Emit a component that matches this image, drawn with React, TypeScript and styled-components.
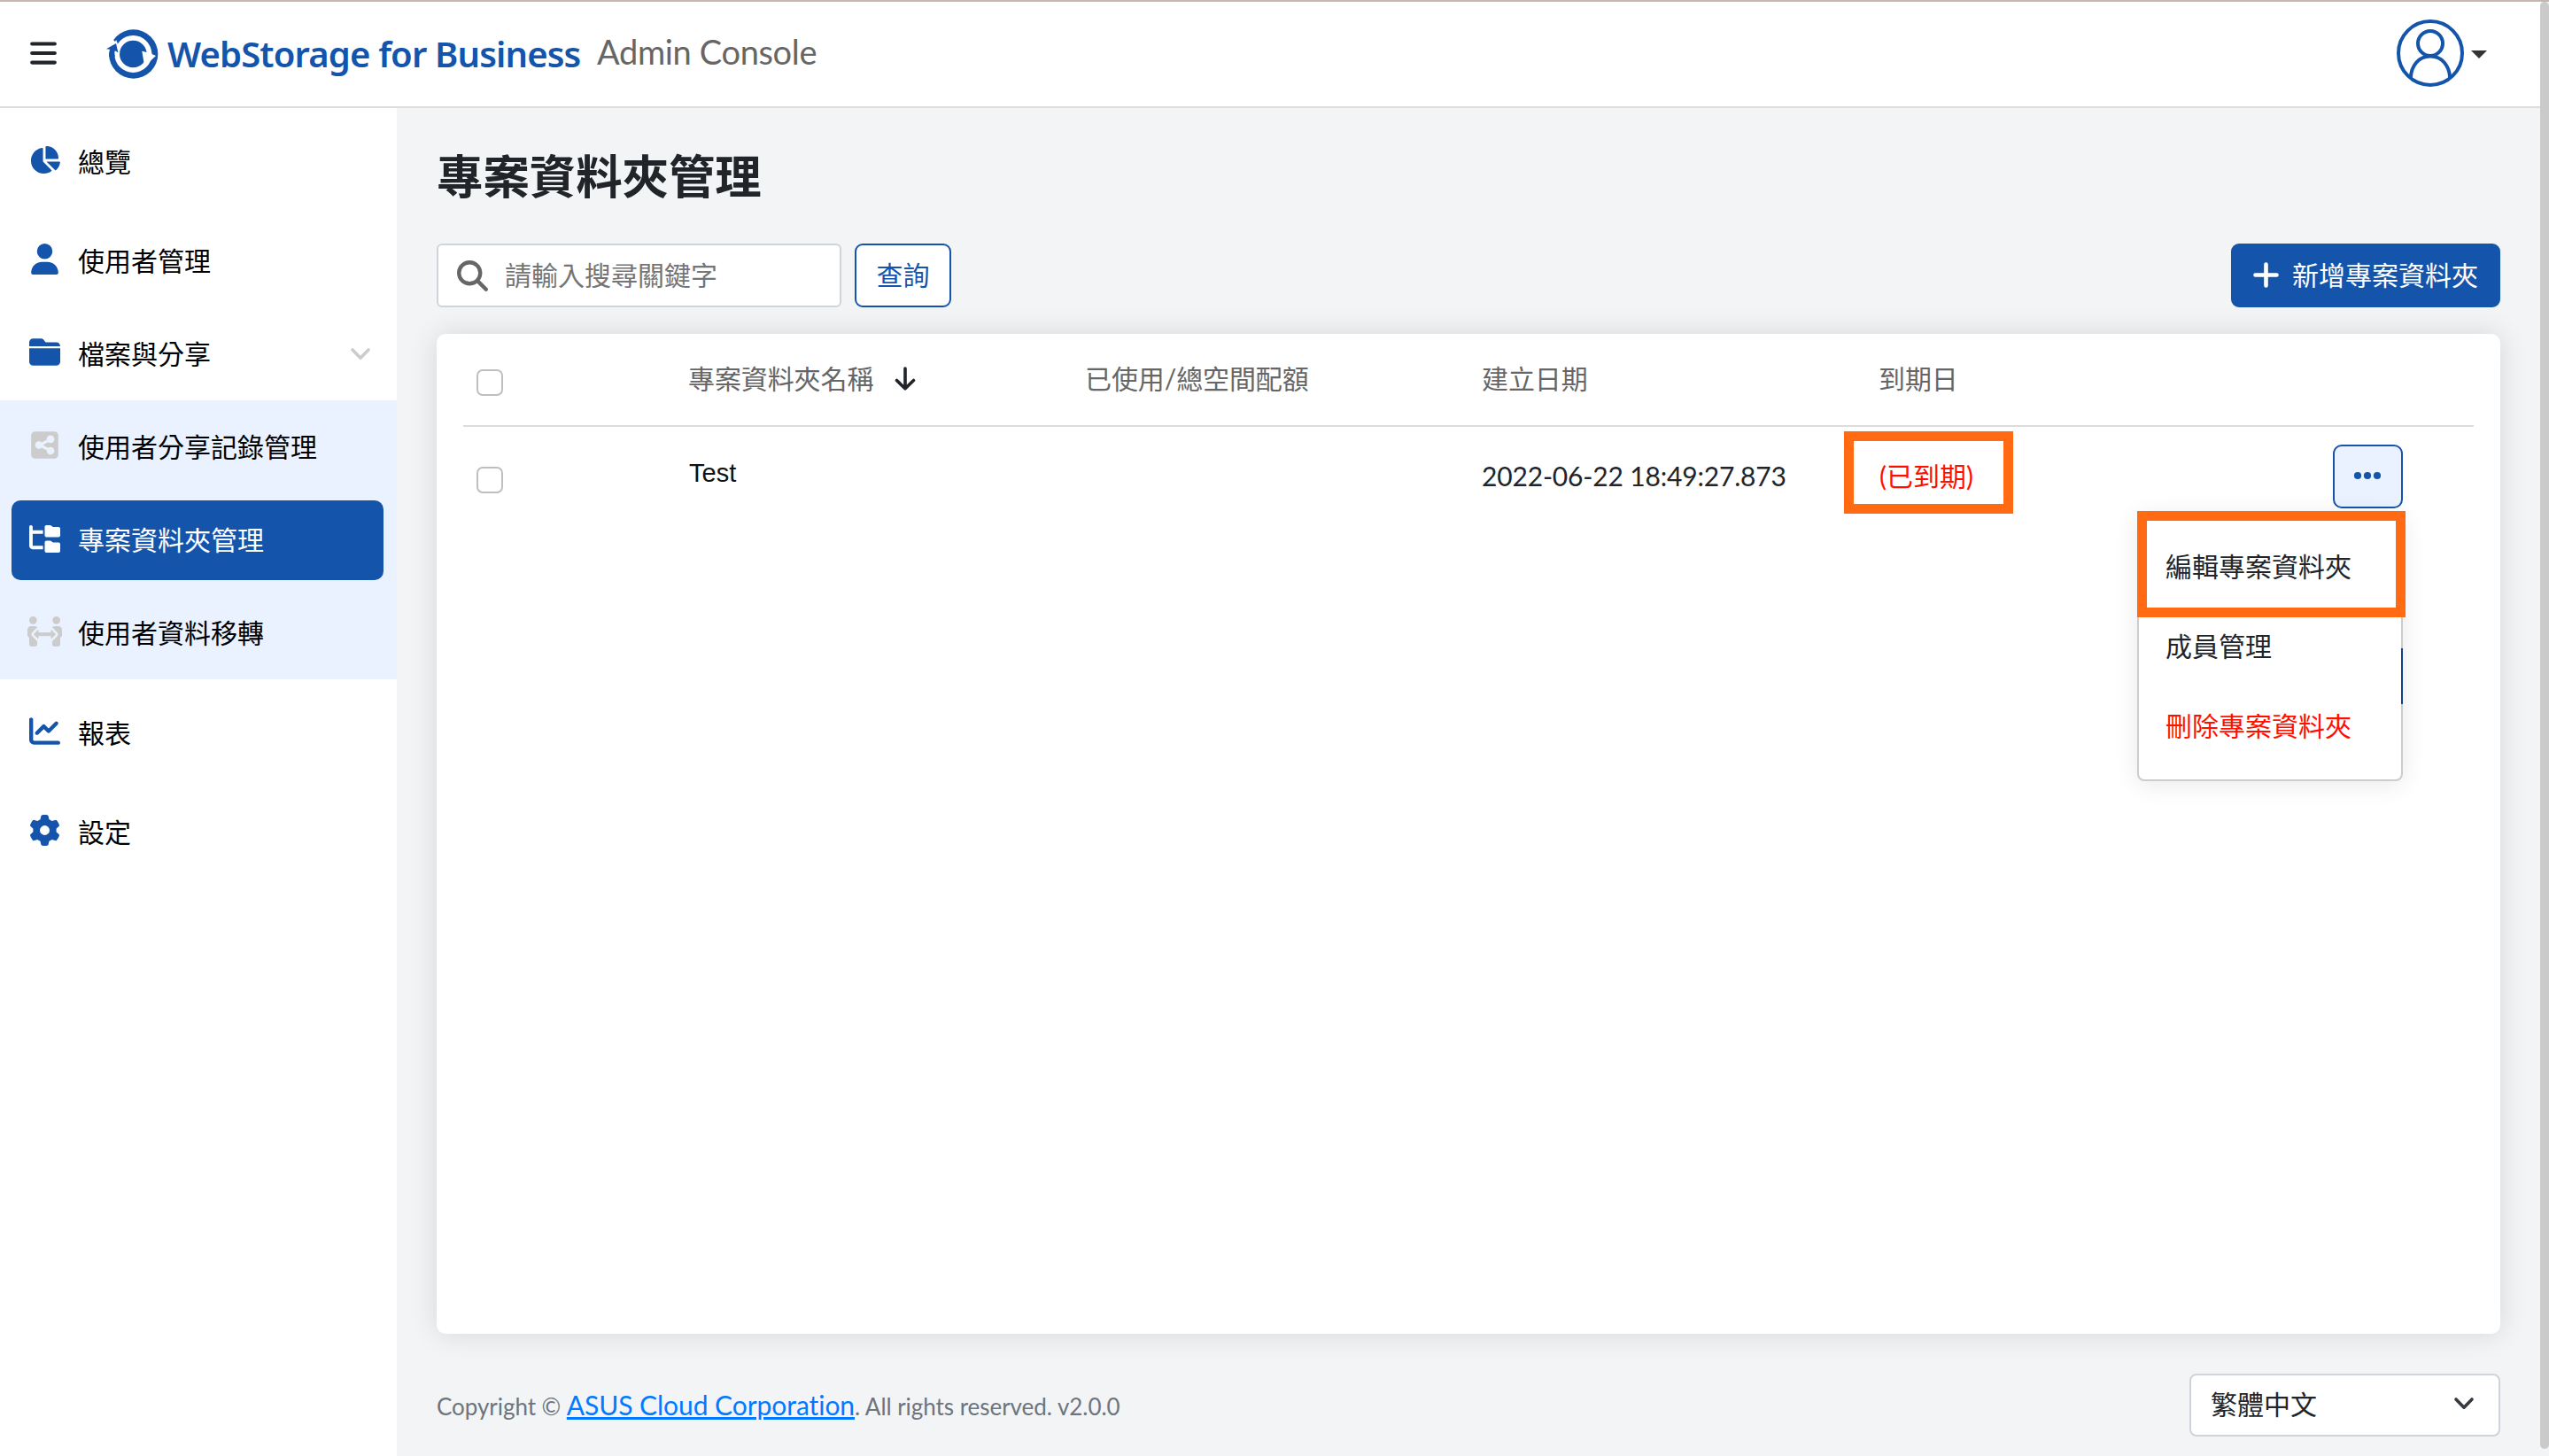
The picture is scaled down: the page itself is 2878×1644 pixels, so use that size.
import React from "react";
import styled, { createGlobalStyle, css } from "styled-components";
import {
  FaChartPie,
  FaUser,
  FaFolderClosed,
  FaSquareShareNodes,
  FaFolderTree,
  FaChartLine,
  FaGear,
  FaMagnifyingGlass,
} from "react-icons/fa6";

const blue = "#1455ab";
const grey = "#666666";
const ink = "#212529";
const red = "#ff0f00";
const orange = "#ff6a13";

const GlobalStyle = createGlobalStyle`
  *, *::before, *::after { box-sizing: border-box; }
  body {
    margin: 0;
    overflow: hidden;
    background: #f3f4f6;
    color: ${ink};
    font-family: Lato, "Noto Sans CJK TC", sans-serif;
    font-size: 30px;
    line-height: 44px;
  }
`;

const Window = styled.div`
  display: flex;
  width: 2878px;
  height: 1644px;
  border-top: 2px solid #c7b5af;
`;

const Page = styled.div`
  flex: 1;
  display: flex;
  flex-direction: column;
  min-width: 0;
`;

const ScrollThumb = styled.div`
  width: 10px;
  height: 1634px;
  border-radius: 5px;
  background: #cacaca;
`;

const Header = styled.header`
  display: flex;
  align-items: center;
  height: 120px;
  padding: 0 60px 2px 34px;
  background: #fff;
  border-bottom: 2px solid #dcdcdc;
`;

const HeaderSpacer = styled.div`
  flex: 1;
`;

const Brand = styled.div`
  display: flex;
  align-items: center;
  margin-left: 54px;
  padding-top: 2px;
`;

const BrandName = styled.span`
  margin: -1px 0 0 9px;
  width: 467px;
  white-space: nowrap;
  font-family: "Noto Sans", sans-serif;
  font-size: 40px;
  font-weight: 600;
  letter-spacing: -0.85px;
  color: ${blue};
`;

const Product = styled.span`
  margin: -6px 0 0 18px;
  white-space: nowrap;
  font-size: 38px;
  letter-spacing: -0.35px;
  color: ${grey};
`;

const Caret = styled.i`
  margin: 2px 0 0 8px;
  border: 9px solid transparent;
  border-top-color: #333;
  border-bottom: 0;
`;

const Body = styled.div`
  flex: 1;
  display: flex;
  min-height: 0;
`;

const Sidebar = styled.nav`
  display: flex;
  flex-direction: column;
  width: 448px;
  padding-top: 8px;
  background: #fff;
`;

const SubMenu = styled.div`
  display: flex;
  flex-direction: column;
  background: #eaf2ff;
`;

const NavItem = styled.a<{ $active?: boolean; $muted?: boolean; $gap?: number }>`
  display: flex;
  align-items: center;
  height: 105px;
  margin-top: ${(p) => p.$gap ?? 0}px;
  padding: 0 30px;
  color: #000;
  svg { color: ${(p) => (p.$muted ? "#cccccc" : blue)}; }
  ${(p) =>
    p.$active &&
    css`
      height: 90px;
      margin: 8px 15px 7px 13px;
      padding: 0 17px;
      border-radius: 10px;
      background: ${blue};
      color: #fff;
      svg { color: #fff; }
    `}
`;

const NavIcon = styled.span`
  display: flex;
  justify-content: center;
  width: 40px;
  margin: -4px 18px 0 0;
  font-size: 35px;
`;

const NavLabel = styled.span`
  flex: 1;
  margin-top: -2px;
`;

const Main = styled.main`
  flex: 1;
  display: flex;
  flex-direction: column;
  padding: 37px 45px 0;
`;

const Title = styled.h1`
  margin: 0;
  font-size: 52.4px;
  line-height: 80px;
  font-weight: 600;
`;

const Toolbar = styled.div`
  display: flex;
  align-items: center;
  margin-top: 36px;
`;

const SearchBox = styled.label`
  display: flex;
  align-items: center;
  width: 457px;
  height: 72px;
  padding-left: 21px;
  border: 2px solid #ced4da;
  border-radius: 6px;
  background: #fff;
  svg { color: ${grey}; font-size: 35px; }
`;

const SearchInput = styled.input`
  width: 360px;
  height: 44px;
  margin: -2px 0 0 19px;
  padding: 0;
  border: 0;
  background: none;
  font: inherit;
  &::placeholder { color: #757575; opacity: 1; }
`;

const Button = styled.button<{ $primary?: boolean }>`
  display: flex;
  align-items: center;
  justify-content: center;
  height: 72px;
  width: ${(p) => (p.$primary ? 304 : 109)}px;
  padding: 0 0 2px;
  margin-left: ${(p) => (p.$primary ? "auto" : "15px")};
  gap: 15px;
  border: 2px solid ${blue};
  border-radius: 9px;
  background: ${(p) => (p.$primary ? blue : "#fff")};
  color: ${(p) => (p.$primary ? "#fff" : blue)};
  font: inherit;
`;

const Card = styled.section`
  height: 1129px;
  margin-top: 30px;
  padding: 0 30px;
  border-radius: 10px;
  background: #fff;
  box-shadow: 0 0 32px rgba(0, 0, 0, 0.12);
`;

const Row = styled.div<{ $head?: boolean }>`
  display: grid;
  grid-template-columns: 254px repeat(4, 448px) 224px;
  height: ${(p) => (p.$head ? 105 : 114)}px;
  letter-spacing: -0.18px;
  ${(p) => p.$head && `letter-spacing: -0.1px; border-bottom: 2px solid #dcdcdc; color: ${grey};`}
`;

const Cell = styled.div<{ $top: number }>`
  display: flex;
  align-items: flex-start;
  padding-top: ${(p) => p.$top}px;
`;

const Checkbox = styled.span`
  width: 30px;
  height: 30px;
  margin-left: 15px;
  border: 2px solid #bfbfbf;
  border-radius: 7px;
  background: #fff;
`;

const SortArrow = styled.svg`
  margin: 9px 0 0 24px;
`;

const FolderName = styled.span`
  padding-left: 1px;
  font-family: "Liberation Sans", sans-serif;
  font-size: 29px;
  letter-spacing: 0;
  color: #111;
`;

const Expired = styled.span`
  position: relative;
  letter-spacing: 0;
  padding-left: 1px;
  color: ${red};
`;

const Highlight = styled.span<{ $x: number; $y: number; $w: number; $h: number }>`
  position: absolute;
  left: ${(p) => p.$x}px;
  top: ${(p) => p.$y}px;
  width: ${(p) => p.$w}px;
  height: ${(p) => p.$h}px;
  border: 11px solid ${orange};
`;

const Actions = styled.div`
  position: relative;
  height: 72px;
  margin: 20px 80px 0 65px;
  letter-spacing: 0;
`;

const MoreButton = styled.button`
  display: flex;
  align-items: center;
  justify-content: center;
  width: 79px;
  height: 72px;
  padding: 0 1px 3px 0;
  border: 2px solid ${blue};
  border-radius: 10px;
  background: #eaf2ff;
`;

const Menu = styled.div`
  position: absolute;
  top: 77px;
  right: 0;
  width: 300px;
  height: 303px;
  padding: 13px 30px;
  border: 2px solid #cccccc;
  border-radius: 8px;
  background: #fff;
  box-shadow: 0 4px 28px rgba(0, 0, 0, 0.09);
`;

const MenuItem = styled.a<{ $danger?: boolean }>`
  display: flex;
  align-items: center;
  height: 90px;
  white-space: nowrap;
  color: ${(p) => (p.$danger ? red : ink)};
`;

const ButtonEdge = styled.i`
  position: absolute;
  right: -2px;
  top: 151px;
  width: 2px;
  height: 63px;
  background: #0f4389;
`;

const Footer = styled.footer`
  display: flex;
  align-items: center;
  justify-content: space-between;
  margin-top: 45px;
`;

const Copyright = styled.p`
  margin: 0;
  font-size: 26px;
  letter-spacing: -0.04px;
  color: #6c757d;
  a {
    font-size: 30px;
    letter-spacing: -0.06px;
    color: #007bff;
    text-decoration: underline;
    text-decoration-thickness: 3px;
  }
`;

const Language = styled.div`
  display: flex;
  align-items: center;
  justify-content: space-between;
  width: 351px;
  height: 71px;
  padding: 0 27px 3px 22px;
  border: 2px solid #ced4da;
  border-radius: 8px;
  background: #fff;
`;

const Chevron = ({ color }: { color: string }) => (
  <svg width="24" height="16" viewBox="0 0 24 16" fill="none" stroke={color} strokeWidth="3.6" strokeLinecap="round" strokeLinejoin="round">
    <path d="M3 3l9 9.2L21 3" />
  </svg>
);

const Hamburger = () => (
  <svg width="30" height="26" viewBox="0 0 30 26" stroke={ink} strokeWidth="4.2" strokeLinecap="round">
    <path d="M2.2 2.5h25.6M2.2 13h25.6M2.2 23.6h25.6" />
  </svg>
);

const BrandMark = () => (
  <svg width="62" height="60" viewBox="294 36 186 180">
    <circle cx="392" cy="126" r="83" fill={blue} />
    <circle cx="391" cy="126" r="54.5" fill="none" stroke="#fff" strokeWidth="17" />
    <path d="M296 100L322 76L330 84L334 78L340 96L346 124L308 132L308 112L296 112Z" fill="#fff" />
    <path d="M300 109L333 90L340 121L329 115Q327 124 329 135L309 135Q308 122 312 110Z" fill={blue} />
    <path d="M421 116L437 120L453 116L454 126L468 132L446 153L444 159L437 152L428 158Z" fill="#fff" />
    <path d="M422 117L429 150Q436 140 437 126Z" fill="#fff" />
  </svg>
);

const PeopleTransfer = () => (
  <svg width="39" height="34" viewBox="0 0 117 102" fill="currentColor">
    <circle cx="19" cy="13" r="13" />
    <circle cx="98" cy="13" r="13" />
    <path d="M14 33h10q9 0 14 8l-5 8v45q0 8-8 8H14q-8 0-8-8V72q-6-3-6-9V47q0-14 14-14Z" />
    <path d="M103 33H93q-9 0-14 8l5 8v45q0 8 8 8h11q8 0 8-8V72q6-3 6-9V47q0-14-14-14Z" />
    <path d="M36 46L22 60.500L36 75M81 46l14 14.500L81 75M26 60.500h66" fill="none" stroke="#eaf2ff" strokeWidth="17" strokeLinecap="round" strokeLinejoin="round" />
    <path d="M36 47L22 60.500L36 74V65H81v9l14-13.500L81 47v9H36Z" stroke="currentColor" strokeWidth="3" strokeLinejoin="round" />
  </svg>
);

const Avatar = () => (
  <svg width="76" height="76" viewBox="0 0 76 76" fill="none" stroke={blue} strokeWidth="4">
    <circle cx="38" cy="38" r="36" />
    <circle cx="38" cy="27" r="14" />
    <path d="M15.8 66C16.5 52 25 41.5 38 41.5S59.500 52 60.200 66" />
  </svg>
);

const Plus = () => (
  <svg width="29" height="29" viewBox="0 0 29 29" stroke="#fff" strokeWidth="4.6" strokeLinecap="round">
    <path d="M14.500 2.500v24M2.500 14.500h24" />
  </svg>
);

const Dots = () => (
  <svg width="32" height="10" viewBox="0 0 32 10" fill={blue}>
    <circle cx="5" cy="5" r="4.100" />
    <circle cx="16" cy="5" r="4.100" />
    <circle cx="27" cy="5" r="4.100" />
  </svg>
);

interface NavProps {
  icon: React.ReactNode;
  label: string;
  active?: boolean;
  muted?: boolean;
  gap?: number;
  children?: React.ReactNode;
}

const Nav = ({ icon, label, active, muted, gap, children }: NavProps) => (
  <NavItem $active={active} $muted={muted} $gap={gap}>
    <NavIcon>{icon}</NavIcon>
    <NavLabel>{label}</NavLabel>
    {children}
  </NavItem>
);

const NavChevron = styled.span`
  display: flex;
  margin-right: -1px;
  svg { color: #ccc; }
`;

export default function App() {
  return (
    <>
      <GlobalStyle />
      <Window>
        <Page>
          <Header>
            <Hamburger />
            <Brand>
              <BrandMark />
              <BrandName>WebStorage for Business</BrandName>
              <Product>Admin Console</Product>
            </Brand>
            <HeaderSpacer />
            <Avatar />
            <Caret />
          </Header>
          <Body>
            <Sidebar>
              <Nav icon={<FaChartPie />} label="總覽" />
              <Nav icon={<FaUser />} label="使用者管理" gap={7} />
              <Nav icon={<FaFolderClosed />} label="檔案與分享">
                <NavChevron>
                  <Chevron color="#cccccc" />
                </NavChevron>
              </Nav>
              <SubMenu>
                <Nav icon={<FaSquareShareNodes />} label="使用者分享記錄管理" muted />
                <Nav icon={<FaFolderTree />} label="專案資料夾管理" active />
                <Nav icon={<PeopleTransfer />} label="使用者資料移轉" muted />
              </SubMenu>
              <Nav icon={<FaChartLine />} label="報表" gap={8} />
              <Nav icon={<FaGear />} label="設定" gap={7} />
            </Sidebar>
            <Main>
              <Title>專案資料夾管理</Title>
              <Toolbar>
                <SearchBox>
                  <FaMagnifyingGlass />
                  <SearchInput placeholder="請輸入搜尋關鍵字" />
                </SearchBox>
                <Button>查詢</Button>
                <Button $primary>
                  <Plus />
                  新增專案資料夾
                </Button>
              </Toolbar>
              <Card>
                <Row $head>
                  <Cell $top={40}><Checkbox /></Cell>
                  <Cell $top={28}>
                    專案資料夾名稱
                    <SortArrow width="24" height="27" viewBox="0 0 24 27" fill="none" stroke={ink} strokeWidth="3.6" strokeLinecap="round" strokeLinejoin="round">
                      <path d="M12 2v22.500M2.500 15.500L12 24.800l9.500-9.300" />
                    </SortArrow>
                  </Cell>
                  <Cell $top={28}>已使用/總空間配額</Cell>
                  <Cell $top={28}>建立日期</Cell>
                  <Cell $top={28}>到期日</Cell>
                  <Cell $top={28} />
                </Row>
                <Row>
                  <Cell $top={45}><Checkbox /></Cell>
                  <Cell $top={30}><FolderName>Test</FolderName></Cell>
                  <Cell $top={33} />
                  <Cell $top={33}>2022-06-22 18:49:27.873</Cell>
                  <Cell $top={33}>
                    <Expired>
                      (已到期)
                      <Highlight $x={-39} $y={-28} $w={191} $h={93} />
                    </Expired>
                  </Cell>
                  <Actions>
                    <MoreButton><Dots /></MoreButton>
                    <Menu>
                      <MenuItem>編輯專案資料夾</MenuItem>
                      <MenuItem>成員管理</MenuItem>
                      <MenuItem $danger>刪除專案資料夾</MenuItem>
                      <ButtonEdge />
                      <Highlight $x={-2} $y={-4} $w={303} $h={120} />
                    </Menu>
                  </Actions>
                </Row>
              </Card>
              <Footer>
                <Copyright>
                  Copyright © <a>ASUS Cloud Corporation</a>. All rights reserved. v2.0.0
                </Copyright>
                <Language>
                  繁體中文
                  <Chevron color="#343a40" />
                </Language>
              </Footer>
            </Main>
          </Body>
        </Page>
        <ScrollThumb />
      </Window>
    </>
  );
}
